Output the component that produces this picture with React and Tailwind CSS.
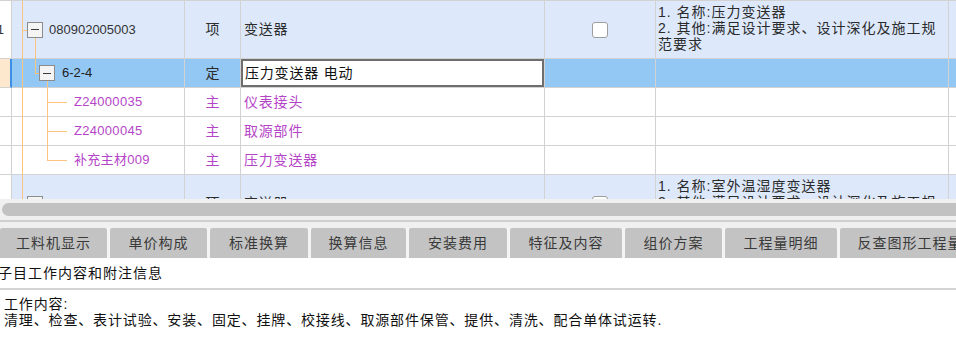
import React from 'react';

const FONT = { fontFamily: '"Liberation Sans", "Noto Sans CJK SC", sans-serif' };

const MinusBox = () => (
  <span className="relative z-10 flex h-4 w-4 shrink-0 items-center justify-center border border-[#8c8c8c] bg-[#f4f4f4]">
    <span className="h-px w-2 bg-[#3a3a3a]" />
  </span>
);

const rows = [
  {
    h: 'h-[58px]', bg: 'bg-[#dde9fb]', num: '1', level: 0, open: true, code: '080902005003',
    type: '项', name: '变送器', check: true,
    features: ['1. 名称:压力变送器', '2. 其他:满足设计要求、设计深化及施工规', '范要求'],
  },
  { h: 'h-[29px]', bg: 'bg-[#93c7f4]', selected: true, level: 1, code: '6-2-4', type: '定', name: '压力变送器 电动', edit: true },
  { h: 'h-[29px]', bg: 'bg-white', level: 2, code: 'Z24000035', type: '主', name: '仪表接头', purple: true },
  { h: 'h-[29px]', bg: 'bg-white', level: 2, code: 'Z24000045', type: '主', name: '取源部件', purple: true },
  { h: 'h-[29px]', bg: 'bg-white', level: 2, last: true, code: '补充主材009', type: '主', name: '压力变送器', purple: true },
  {
    h: 'h-[58px]', bg: 'bg-[#dde9fb]', num: '2', level: 0, code: '080902005004',
    type: '项', name: '变送器', check: true,
    features: ['1. 名称:室外温湿度变送器', '2. 其他:满足设计要求、设计深化及施工规', '范要求'],
  },
];

const tabs = [
  ['工料机显示', 'w-[107px]'],
  ['单价构成', 'w-[97px]'],
  ['标准换算', 'w-[98px]'],
  ['换算信息', 'w-[95px]'],
  ['安装费用', 'w-[98px]'],
  ['特征及内容', 'w-[112px]'],
  ['组价方案', 'w-[97px]'],
  ['工程量明细', 'w-[112px]'],
  ['反查图形工程量', 'w-[140px]'],
];

const Tree = ({ r }) => (
  <>
    <span className="absolute left-[10px] top-0 -bottom-px w-px bg-[#fbc47f]" />
    {r.level === 0 && <span className="absolute left-[10px] top-1/2 h-px w-[5px] bg-[#fbc47f]" />}
    {r.level === 0 && r.open && <span className="absolute left-[23px] top-[36px] -bottom-px w-px bg-[#fbc47f]" />}
    {r.level === 1 && (
      <>
        <span className="absolute left-[23px] top-0 h-1/2 w-px bg-[#fbc47f]" />
        <span className="absolute left-[23px] top-1/2 h-px w-[5px] bg-[#fbc47f]" />
        <span className="absolute left-[35px] top-[21px] -bottom-px w-px bg-[#fbc47f]" />
      </>
    )}
    {r.level === 2 && (
      <>
        <span className={`absolute left-[35px] top-0 w-px bg-[#fbc47f] ${r.last ? 'h-1/2' : '-bottom-px'}`} />
        <span className="absolute left-[35px] top-1/2 h-px w-[20px] bg-[#fbc47f]" />
      </>
    )}
  </>
);

const Row = ({ r }) => {
  const txt = r.purple ? 'text-[#b545c8]' : 'text-[#2b2b2b]';
  return (
    <div className={`flex ${r.h} shrink-0`}>
      <div
        className={`w-[12px] shrink-0 overflow-visible border-b border-[#d2d2d2] ${
          r.selected ? 'border-r-2 border-r-[#3d8ee6] bg-[#fde7cd]' : 'border-r bg-white'
        } flex items-center justify-end pr-[7px] text-[13px] text-[#333]`}
      >
        {r.num}
      </div>
      <div className={`relative flex w-[173px] shrink-0 items-center border-r border-b border-[#d2d2d2] ${r.bg}`}>
        <Tree r={r} />
        {r.level === 0 && (
          <div className="flex items-center pl-[15px]">
            <MinusBox />
            <span className="ml-[6px] text-[13px] text-[#333]">{r.code}</span>
          </div>
        )}
        {r.level === 1 && (
          <div className="flex items-center pl-[27px]">
            <MinusBox />
            <span className="ml-[7px] text-[13px] text-[#222]">{r.code}</span>
          </div>
        )}
        {r.level === 2 && <span className={`pl-[62px] text-[13px] tracking-[0.3px] ${txt}`}>{r.code}</span>}
      </div>
      <div className={`flex w-[56px] shrink-0 items-center justify-center border-r border-b border-[#d2d2d2] text-[14px] ${r.bg} ${txt}`}>
        {r.type}
      </div>
      <div className={`flex w-[304px] shrink-0 items-center border-r border-b border-[#d2d2d2] ${r.bg}`}>
        {r.edit ? (
          <div className="flex h-full w-full items-center border-2 border-[#6e6e6e] bg-white pl-[2px] text-[14px] tracking-[0.8px] text-[#111]">
            {r.name}
          </div>
        ) : (
          <span className={`pl-[3px] text-[14px] tracking-[0.8px] ${txt}`}>{r.name}</span>
        )}
      </div>
      <div className={`flex w-[111px] shrink-0 items-center justify-center border-r border-b border-[#d2d2d2] ${r.bg}`}>
        {r.check && <span className="h-4 w-4 rounded-[3px] border border-[#9e9e9e] bg-white" />}
      </div>
      <div className={`w-[293px] shrink-0 border-r border-b border-[#d2d2d2] pl-[2px] pt-[3px] text-[14px] leading-[16px] tracking-[1px] text-[#2b2b2b] ${r.bg}`}>
        {r.features && r.features.map((f) => (
          <div key={f} className="whitespace-nowrap">{f}</div>
        ))}
      </div>
      <div className={`flex-1 border-b border-[#d2d2d2] ${r.bg}`} />
    </div>
  );
};

export default function App() {
  return (
    <div className="h-[357px] w-[956px] overflow-hidden bg-white" style={FONT}>
      <div className="flex h-[199px] flex-col overflow-hidden border-t border-[#d2d2d2]">
        {rows.map((r, i) => (
          <Row key={i} r={r} />
        ))}
      </div>

      <div className="flex h-[21px] items-center bg-[#f0f0f0] pl-[2px]">
        <div className="-mr-4 h-[13px] flex-1 rounded-full bg-[#c2c2c2]" />
      </div>
      <div className="h-[2px] bg-[#cfcfcf]" />
      <div className="h-[6px] bg-[#f0f0f0]" />

      <div className="flex h-[30px] gap-[3px] bg-[#f4f4f4]">
        {tabs.map(([t, w]) => (
          <div
            key={t}
            className={`${w} flex shrink-0 items-center justify-center whitespace-nowrap rounded-t-[2px] bg-[#c3c3c3] text-[14px] tracking-[1px] text-[#3a3a3a]`}
          >
            {t}
          </div>
        ))}
      </div>

      <div className="flex h-[32px] items-center border-b-2 border-[#d4d4d4] text-[14px] tracking-[1px] text-[#111]">
        <span className="-ml-[2px]">子目工作内容和附注信息</span>
      </div>

      <div className="pl-[4px] pt-[6px] text-[14px] leading-[16px] tracking-[0.85px] text-[#111]">
        <div>工作内容:</div>
        <div className="whitespace-nowrap">清理、检查、表计试验、安装、固定、挂牌、校接线、取源部件保管、提供、清洗、配合单体试运转.</div>
      </div>
    </div>
  );
}
